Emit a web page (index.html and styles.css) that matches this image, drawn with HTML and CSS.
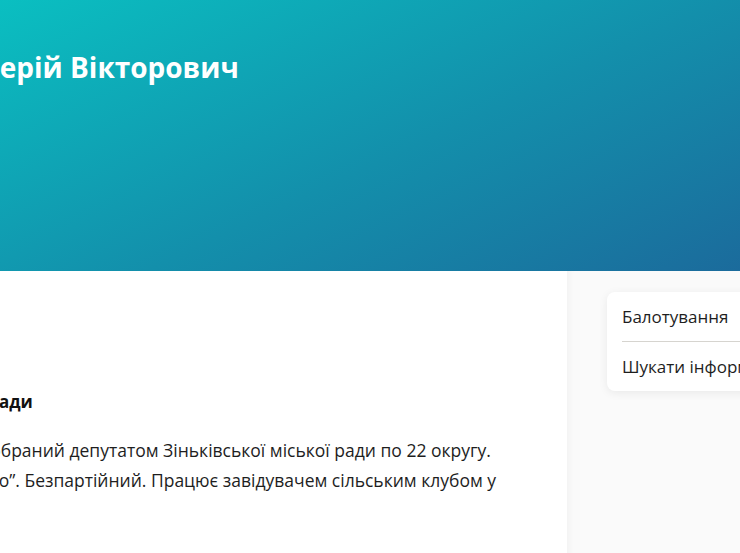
FILE: index.html
```html
<!DOCTYPE html>
<html lang="uk">
<head>
  <meta charset="UTF-8">
  <meta name="viewport" content="width=device-width, initial-scale=1.0">
  <title>Валерій Вікторович</title>
  <link rel="stylesheet" href="styles.css">
</head>
<body>
  <header class="hero">
    <div class="hero-inner">
      <h1 class="hero-title">Валерій Вікторович</h1>
    </div>
  </header>

  <div class="content">
    <div class="layout">
      <main class="bio">
        <h2 class="bio-title">Член Зіньківської ради</h2>
        <p class="bio-text">
          У жовтні 2020 року обраний депутатом Зіньківської міської ради по 22 округу.
          Від партії “Рідне місто”. Безпартійний. Працює завідувачем сільським клубом у
          селі громади.
        </p>
      </main>

      <aside class="side">
        <nav class="side-card">
          <a href="#" class="side-link">Балотування</a>
          <a href="#" class="side-link">Шукати інформацію</a>
        </nav>
      </aside>
    </div>
  </div>
</body>
</html>
```

FILE: styles.css
```css
html, body {
  overflow: hidden;
}

body {
  margin: 0;
  font-family: "Open Sans", "Noto Sans", sans-serif;
  color: #1e1e1e;
  background-color: #fff;
}

.hero {
  display: flex;
  justify-content: center;
  height: 271px;
  background: linear-gradient(155deg, #0abfc1 0%, #138fab 55%, #1b6b9c 100%);
}

.hero-inner {
  flex: none;
  width: 848px;
  padding-top: 48px;
}

.hero-title {
  margin: 0;
  font-size: 28px;
  line-height: 38px;
  font-weight: 700;
  color: #fff;
}

.content {
  display: flex;
  justify-content: center;
}

.layout {
  flex: none;
  width: 1090px;
  display: grid;
  grid-template-columns: 742px 1fr;
  min-height: 282px;
}

.bio {
  padding: 119px 57px 40px 0;
}

.bio-title {
  margin: 0;
  font-size: 17px;
  line-height: 24px;
  font-weight: 700;
  color: #111;
}

.bio-text {
  margin: 21px 0 0;
  font-size: 17.5px;
  line-height: 30px;
}

.side {
  background-color: #fafafa;
  box-shadow: inset 8px 0 8px -8px rgba(0, 0, 0, 0.06);
  padding: 21px 40px;
}

.side-card {
  display: flex;
  flex-direction: column;
  background-color: #fff;
  border-radius: 8px;
  padding: 0 15px;
  box-shadow: 0 2px 10px rgba(0, 0, 0, 0.07);
}

.side-link {
  padding: 12px 0;
  font-size: 17px;
  line-height: 25px;
  color: #1e1e1e;
  text-decoration: none;
  white-space: nowrap;
}

.side-link + .side-link {
  border-top: 1px solid #d6d4cf;
}
```
